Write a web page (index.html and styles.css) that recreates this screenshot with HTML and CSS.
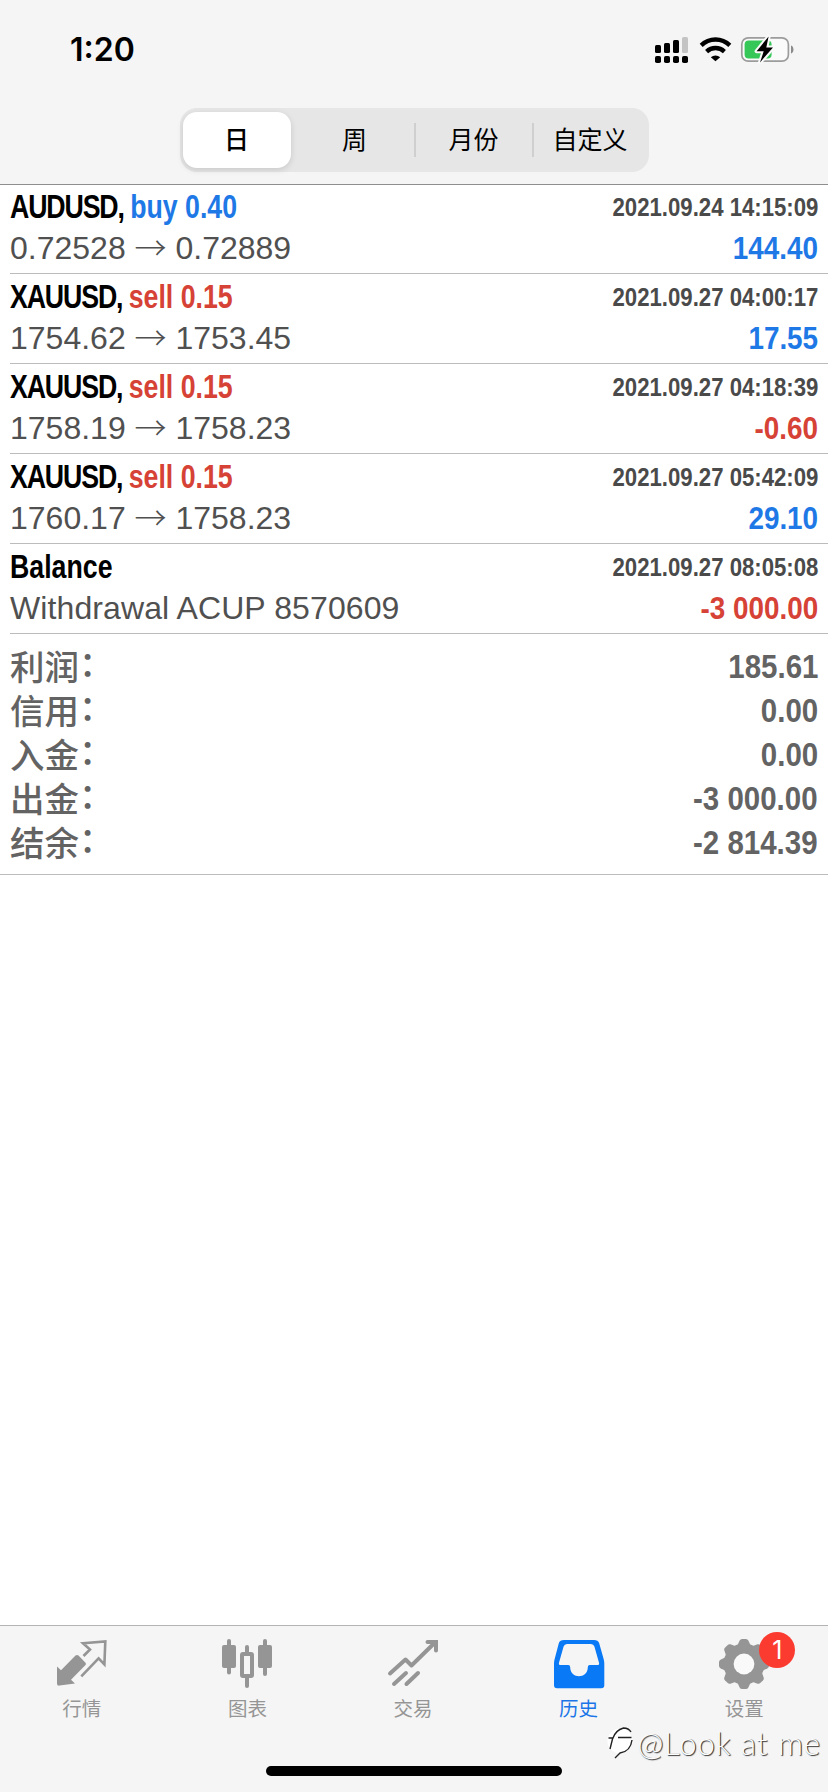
FILE: index.html
```html
<!DOCTYPE html>
<html lang="zh-CN">
<head>
<meta charset="utf-8">
<title>历史</title>
<link rel="stylesheet" href="styles.css">
</head>
<body>
<div class="app">
  <header class="header">
    <div class="status">
      <span class="time">1:20</span>
      <svg class="status-icons" width="142" height="30" viewBox="653 35 142 30">
        <g fill="#000">
          <rect x="655" y="45" width="6" height="8" rx="1.5"/><rect x="664" y="43" width="6" height="10" rx="1.5"/><rect x="673" y="40" width="6" height="13" rx="1.5"/>
          <rect x="655" y="56" width="6" height="7" rx="1.8"/><rect x="664" y="56" width="6" height="7" rx="1.8"/><rect x="673" y="56" width="6" height="7" rx="1.8"/><rect x="682" y="56" width="6" height="7" rx="1.8"/>
        </g>
        <rect x="682" y="37" width="6" height="16" rx="1.5" fill="#c4c4c4"/>
        <g fill="none" stroke="#000" stroke-width="4.3">
          <path d="M701.2 45.4a20.3 20.3 0 0 1 28.6 0"/>
          <path d="M706.6 51.6a12.8 12.8 0 0 1 17.8 0"/>
        </g>
        <path d="M710.8 57.2a7.2 7.2 0 0 1 9.4 0l-4.7 4z" fill="#000"/>
        <rect x="741.8" y="37.8" width="46.6" height="23.4" rx="6.5" fill="#fafafa" stroke="#9c9c9c" stroke-width="1.7"/>
        <rect x="744.6" y="40.6" width="27" height="17.8" rx="4" fill="#36c759"/>
        <path d="M791 45.5c3.3.7 3.3 7.3 0 8z" fill="#8b8b8b"/>
        <path d="M768.6 36.5 756.6 51.2h7.1l-3.7 11.2L773 47.6h-6.7z" fill="#000" stroke="#fafafa" stroke-width="4" stroke-linejoin="round" paint-order="stroke"/>
      </svg>
    </div>
    <nav class="segments">
      <span class="segment selected">日</span>
      <span class="segment">周</span>
      <span class="segment divided">月份</span>
      <span class="segment divided">自定义</span>
    </nav>
  </header>

  <main class="content">
    <section class="deals">
      <article class="deal">
        <div class="line"><b class="symbol">AUDUSD, <span class="side blue">buy 0.40</span></b><b class="date">2021.09.24 14:15:09</b></div>
        <div class="line"><span class="detail">0.72528 <span class="arrow">→</span> 0.72889</span><b class="amount blue">144.40</b></div>
      </article>
      <article class="deal">
        <div class="line"><b class="symbol">XAUUSD, <span class="side red">sell 0.15</span></b><b class="date">2021.09.27 04:00:17</b></div>
        <div class="line"><span class="detail">1754.62 <span class="arrow">→</span> 1753.45</span><b class="amount blue">17.55</b></div>
      </article>
      <article class="deal">
        <div class="line"><b class="symbol">XAUUSD, <span class="side red">sell 0.15</span></b><b class="date">2021.09.27 04:18:39</b></div>
        <div class="line"><span class="detail">1758.19 <span class="arrow">→</span> 1758.23</span><b class="amount red">-0.60</b></div>
      </article>
      <article class="deal">
        <div class="line"><b class="symbol">XAUUSD, <span class="side red">sell 0.15</span></b><b class="date">2021.09.27 05:42:09</b></div>
        <div class="line"><span class="detail">1760.17 <span class="arrow">→</span> 1758.23</span><b class="amount blue">29.10</b></div>
      </article>
      <article class="deal">
        <div class="line"><b class="symbol"><span class="side">Balance</span></b><b class="date">2021.09.27 08:05:08</b></div>
        <div class="line"><span class="detail note">Withdrawal ACUP 8570609</span><b class="amount red">-3 000.00</b></div>
      </article>
    </section>
    <section class="summary">
      <div class="total"><span>利润<span class="colon">：</span></span><b class="sum">185.61</b></div>
      <div class="total"><span>信用<span class="colon">：</span></span><b class="sum">0.00</b></div>
      <div class="total"><span>入金<span class="colon">：</span></span><b class="sum">0.00</b></div>
      <div class="total"><span>出金<span class="colon">：</span></span><b class="sum">-3 000.00</b></div>
      <div class="total"><span>结余<span class="colon">：</span></span><b class="sum">-2 814.39</b></div>
    </section>
  </main>

  <footer class="footer">
    <nav class="tabs">
      <div class="tab">
        <svg width="52" height="52" viewBox="56 1637 52 52">
          <path d="M57 1666.5l4 3.8 14.5-14.8q1.5-1.2 3 0l7 7.2q1 1.2 0 2.4L71 1679.8l4 3.6-15.500 2.200q-2.500.3-2.500-2.200z" fill="#959595"/>
          <path d="M83.500 1656l6.500-6.500-7-6.300 22.300-1.800-.9 23-5.800-6.100-17.300 18" fill="none" stroke="#959595" stroke-width="2.600"/>
        </svg>
        <span>行情</span>
      </div>
      <div class="tab">
        <svg width="52" height="52" viewBox="222 1637 52 52">
          <g fill="#959595"><rect x="223" y="1645" width="14" height="23" rx="2"/><rect x="228" y="1639" width="4" height="35.500" rx="2"/><rect x="259" y="1645" width="14" height="23" rx="2"/><rect x="264" y="1639" width="4" height="37" rx="2"/><rect x="246" y="1645" width="4" height="9" rx="2"/><rect x="246" y="1675" width="4" height="13" rx="2"/></g>
          <rect x="243" y="1654" width="10" height="22" rx="1" fill="#f5f5f5" stroke="#959595" stroke-width="4"/>
        </svg>
        <span>图表</span>
      </div>
      <div class="tab">
        <svg width="52" height="52" viewBox="387 1637 52 52">
          <g fill="none" stroke="#959595" stroke-width="4" stroke-linecap="round" stroke-linejoin="round"><path d="M390 1673.500l15.500-14 6 6 24-23.500"/><path d="M427.500 1642h8.500v8.500" stroke-linejoin="miter"/><path d="M394 1684l12-11M406.500 1684l11.500-11"/></g>
        </svg>
        <span>交易</span>
      </div>
      <div class="tab active">
        <svg width="52" height="52" viewBox="552 1637 52 52">
          <path fill-rule="evenodd" fill="#0a79f5" d="M563 1640h30q4 0 5.200 3.200l4.500 16q.6 2 .6 4v22q0 3-3 3h-44.300q-3 0-3-3v-22q0-2 .6-4l4.200-16q1-3.200 5.200-3.200zM566 1644q-2.600 0-3.400 2.500l-4.600 16.200q-.6 2.300 1.700 2.300h7.500q2 0 2 2.200c0 12 17.600 12 17.600 0q0-2.200 2-2.200h7.500q2.300 0 1.700-2.300l-4.600-16.200q-.8-2.500-3.400-2.500z"/>
        </svg>
        <span>历史</span>
      </div>
      <div class="tab">
        <svg width="52" height="52" viewBox="718 1637 52 52">
          <g fill="#959595" transform="translate(744 1664)">
            <circle r="20.500"/>
            <path id="teeth" d="M-6.500-19l2.200-4.500q.8-1.500 2.300-1.500h4q1.500 0 2.300 1.500l2.200 4.500v38l-2.200 4.500q-.8 1.500-2.300 1.500h-4q-1.500 0-2.300-1.500l-2.200-4.500z"/>
            <use href="#teeth" transform="rotate(45)"/><use href="#teeth" transform="rotate(90)"/><use href="#teeth" transform="rotate(135)"/>
            <circle r="10.400" fill="#f9f9f9"/>
          </g>
        </svg>
        <span>设置</span>
        <i class="badge">1</i>
      </div>
    </nav>
    <div class="home-indicator"></div>
    <div class="watermark">
      <svg width="32" height="38" viewBox="606 1728 32 38">
        <circle cx="621" cy="1745" r="12.500" fill="#fff"/>
        <path class="mark" d="M609.500 1742h4.500M611 1753l2.500-10c2-6 5-9.500 11-11 3.500 0 6 1.500 7.500 4M619 1741.500h13.500M633 1744c-1 8-5 12-12 13l-5 5"/>
      </svg><span>@Look at me</span>
    </div>
  </footer>
</div>
</body>
</html>
```
FILE: styles.css
```css
* { box-sizing: border-box; }
body {
  margin: 0;
  background: #fff;
  font-family: "Liberation Sans", "Noto Sans CJK SC", sans-serif;
}
.app {
  display: flex;
  flex-direction: column;
  width: 828px;
  height: 1792px;
  overflow: hidden;
}
.header {
  display: flex;
  flex-direction: column;
  align-items: center;
  height: 185px;
  flex: none;
  background: #f5f5f5;
  border-bottom: 1px solid #8e8e8e;
}
.status {
  display: flex;
  justify-content: space-between;
  align-items: center;
  width: 100%;
  height: 108px;
  padding: 0 33px 8px 70px;
}
.time {
  font: 600 32px/40px Inter, sans-serif;
}
.segments {
  display: grid;
  grid-template-columns: 113px 118px 118px 115px;
  width: 469px;
  height: 64px;
  padding: 4px 2px 4px 3px;
  border-radius: 17px;
  background: #e6e6e6;
}
.segment {
  display: flex;
  align-items: center;
  justify-content: center;
  height: 34px;
  margin-top: 11px;
  padding-bottom: 3px;
  font: 400 25px/31px "Noto Sans CJK SC", sans-serif;
}
.selected {
  width: 108px;
  height: 56px;
  margin-top: 0;
  border-radius: 14px;
  background: #fff;
  font-weight: 500;
  box-shadow: 0 2px 6px rgba(0, 0, 0, 0.13);
}
.divided { border-left: 2px solid #cfcfcf; }

.content { flex: 1; }
.deal {
  height: 90px;
  margin-left: 10px;
  padding: 3px 10px 0 0;
  border-bottom: 1px solid #bcbcbc;
}
.deal:first-child { height: 89px; padding-top: 2px; }
.line {
  display: flex;
  justify-content: space-between;
  height: 41px;
  line-height: 41px;
  white-space: nowrap;
}
.symbol {
  font-size: 33px;
  line-height: 40px;
  letter-spacing: -1.400px;
  transform: scaleX(0.81);
  transform-origin: left;
}
.side { letter-spacing: 0; }
.date {
  font-size: 26px;
  color: #4a4a4a;
  transform: scaleX(0.853);
  transform-origin: right;
}
.detail {
  font-size: 32px;
  color: #505050;
}
.note { letter-spacing: 0.1px; }
.arrow {
  font-family: "Noto Sans CJK SC", sans-serif;
  font-weight: 300;
  line-height: 1;
  vertical-align: -1px;
}
.amount {
  font-size: 32px;
  transform: scaleX(0.87);
  transform-origin: right;
}
.blue { color: #1e78e6; }
.red { color: #d64236; }

.summary {
  height: 241px;
  padding: 9px 10px 0;
  border-bottom: 1px solid #bcbcbc;
}
.total {
  display: flex;
  justify-content: space-between;
  height: 44px;
  font: 500 34.500px/44px "Noto Sans CJK SC", sans-serif;
  color: #636363;
}
.colon { line-height: 1; vertical-align: 4px; }
.sum {
  font: 700 33.500px/48px "Liberation Sans", sans-serif;
  transform: scaleX(0.88);
  transform-origin: right;
}

.footer {
  position: relative;
  height: 167px;
  flex: none;
  background: #f5f5f5;
  border-top: 1px solid #b4b4b4;
}
.tabs {
  display: grid;
  grid-template-columns: repeat(5, 1fr);
}
.tab {
  position: relative;
  display: flex;
  flex-direction: column;
  align-items: center;
  padding: 11px 2px 0 0;
  color: #959595;
  font: 400 19.500px/28px "Noto Sans CJK SC", sans-serif;
}
.tab span { margin-top: 5px; }
.tab svg { display: block; }
.active { color: #1b75e8; }
.badge {
  position: absolute;
  left: 97px;
  top: 6px;
  width: 36px;
  height: 36px;
  border-radius: 50%;
  background: #fb3b30;
  color: #fff;
  text-align: center;
  font: 400 25px/36px Inter, sans-serif;
}
.home-indicator {
  position: absolute;
  left: 266px;
  bottom: 16px;
  width: 296px;
  height: 10px;
  border-radius: 5px;
  background: #000;
}
.watermark {
  position: absolute;
  right: 7px;
  top: 98px;
  display: flex;
  align-items: center;
  color: #fff;
  font: 300 31px/38px Lato, sans-serif;
  letter-spacing: 1px;
  white-space: nowrap;
  text-shadow: 1px 1px 1px #333, 1px 0 0 #999;
}
.mark { fill: none; stroke: #222; stroke-width: 1.400; stroke-linejoin: round; }
```
